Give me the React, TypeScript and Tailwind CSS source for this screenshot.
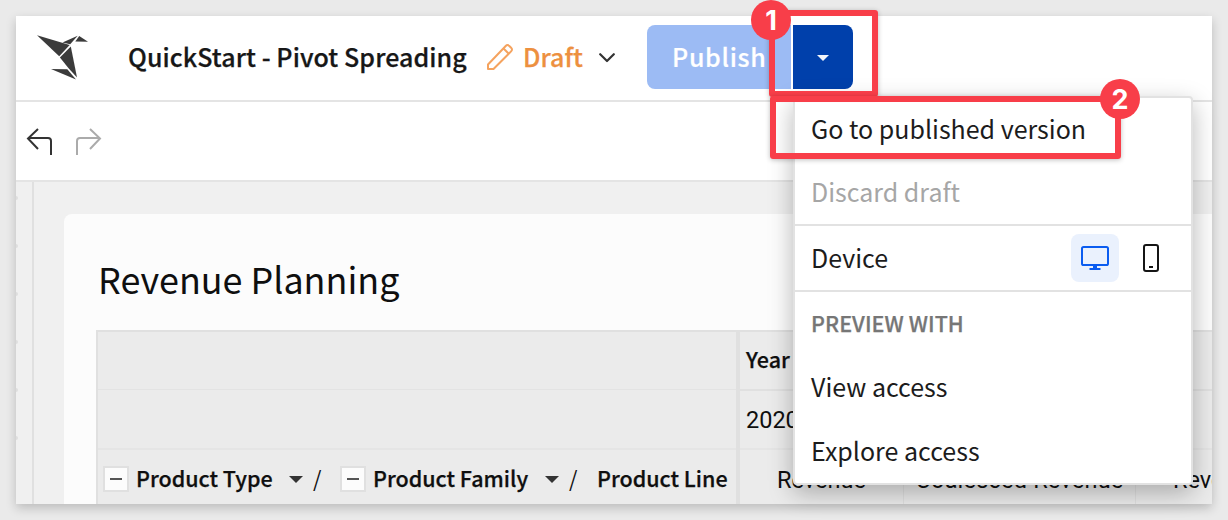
const T = ({ c, children }: { c: string; children: string }) => (
  <div className={"whitespace-nowrap " + c}>{children}</div>
);

function Caret({ c }: { c: string }) {
  return (
    <svg className={c} viewBox="0 0 14 7">
      <path d="M0 0H14L7 7Z" fill="currentColor" />
    </svg>
  );
}

function Minus() {
  return (
    <div className="mt-[2px] flex h-[26px] w-[26px] shrink-0 items-center justify-center border-2 border-[#e0e0e0] bg-[#fcfcfc]">
      <div className="h-[2px] w-3 bg-[#555]" />
    </div>
  );
}

function TopBar() {
  return (
    <header className="flex h-[86px] shrink-0 items-center border-b-2 border-[#e4e4e4] bg-white">
      <svg className="ml-[21px] h-[46px] w-[52px] shrink-0" viewBox="37 35 52 46" fill="#3b3b3b">
        <path d="M37 35.3L69.7 44.9L59.2 56.3Z" />
        <path d="M62.5 42.4L77.7 35.8L70.2 44.2Z" />
        <path d="M79.2 36L88 41.7L75.3 41.6Z" />
        <path d="M70.8 46.4L77 77.4L69 68.8L59.9 57.6Z" />
        <path d="M51 69L67.3 69.2L76 79.4Z" />
      </svg>
      <T c="-mt-[3px] ml-[39px] w-[339px] text-[25px] font-medium tracking-[0.08px] text-[#171717] [-webkit-text-stroke:0.25px_#171717]">QuickStart - Pivot Spreading</T>
      <svg className="-mt-[2px] ml-[19px] h-[28px] w-[28px] shrink-0" viewBox="486 42 28 28" fill="none" stroke="#f5a35f" strokeWidth="2" strokeLinejoin="round">
        <path d="M488 68V63.5L505.7 45Q507.5 43.2 509.3 45L511.1 46.8Q512.9 48.6 511.1 50.4L493.5 68Z" />
        <path d="M503.5 47.5L508.8 52.8" />
      </svg>
      <T c="-mt-[3px] ml-[9px] w-[59px] text-[25px] font-medium text-[#ed903f] [-webkit-text-stroke:0.25px_#ed903f]">Draft</T>
      <svg className="ml-[17px] h-[10px] w-[16px] shrink-0" viewBox="0 0 16 10" fill="none" stroke="#333" strokeWidth="2.2" strokeLinecap="round" strokeLinejoin="round">
        <path d="M1.2 1.2L8 8L14.8 1.2" />
      </svg>
      <div className="ml-8 mt-[-2px] flex h-16 w-[144px] shrink-0 items-center rounded-l-lg bg-[#9cbbf4] pl-[25px]">
        <T c="-mt-[2px] text-[25px] font-medium tracking-[0.7px] text-white [-webkit-text-stroke:0.2px_white]">Publish</T>
      </div>
      <div className="ml-[2px] mt-[-2px] flex h-16 w-[60px] shrink-0 items-center justify-center rounded-r-lg bg-[#0040ab] pt-[2px] text-[#f2f5fa]">
        <Caret c="h-[6px] w-3" />
      </div>
    </header>
  );
}

function Toolbar() {
  return (
    <div className="flex h-20 shrink-0 items-center border-b-2 border-[#e4e4e4] bg-white pt-[2px]">
      <svg className="ml-[10px] h-[28px] w-[28px] shrink-0" viewBox="26 128 28 28" fill="none" stroke="#333" strokeWidth="2">
        <path d="M38 129L28 138.5L38 149M28 138H48Q51 138 51 141V155" />
      </svg>
      <svg className="ml-[21px] h-[28px] w-[28px] shrink-0" viewBox="75 128 28 28" fill="none" stroke="#ababab" strokeWidth="2">
        <path d="M90 129L100 138.5L90 149M100 138H80Q77 138 77 141V155" />
      </svg>
    </div>
  );
}

function PivotTable() {
  return (
    <div className="ml-8 flex h-[176px] w-[1120px] border-l-2 border-t-2 border-[#e0e0e0] bg-[#ebebeb] text-[#0f0f0f]">
      <div className="flex w-[642px] shrink-0 flex-col border-r-4 border-[#e0e0e0]">
        <div className="h-[58px] shrink-0 border-b border-[#e3e3e3]" />
        <div className="h-[60px] shrink-0 border-b-2 border-[#e5e5e5]" />
        <div className="flex h-[58px] items-center pl-[5px]">
          <Minus />
          <T c="ml-[7px] w-[137px] text-[21.5px] font-medium [-webkit-text-stroke:0.25px_#0f0f0f]">Product Type</T>
          <Caret c="ml-[16px] mt-[2px] h-[7px] w-[14px] shrink-0 text-[#333]" />
          <T c="ml-[10px] w-[8px] text-[21.5px]">/</T>
          <div className="w-[19px] shrink-0" />
          <Minus />
          <T c="ml-[7px] w-[156px] text-[21.5px] font-medium [-webkit-text-stroke:0.25px_#0f0f0f]">Product Family</T>
          <Caret c="ml-[16px] mt-[2px] h-[7px] w-[14px] shrink-0 text-[#333]" />
          <T c="ml-[10px] w-[8px] text-[21.5px]">/</T>
          <T c="ml-[20px] text-[21.5px] font-medium [-webkit-text-stroke:0.25px_#0f0f0f]">Product Line</T>
        </div>
      </div>
      <div className="flex w-[476px] shrink-0 flex-col">
        <div className="flex h-[59px] shrink-0 items-center border-b-2 border-[#e0e0e0] pb-[3px] pl-[6px]">
          <T c="text-[21.5px] font-medium [-webkit-text-stroke:0.25px_#0f0f0f]">Year</T>
        </div>
        <div className="flex h-[59px] shrink-0 items-center border-b-2 border-[#e5e5e5] pl-[6px] pt-[2px] font-[Roboto]">
          <T c="text-[23.5px]">2020</T>
        </div>
        <div className="flex h-[58px] shrink-0 overflow-hidden pt-[4px] font-[Roboto] text-[23.5px]">
          <div className="-mt-1 flex w-[164px] shrink-0 items-center justify-center border-r border-[#e0e0e0] pt-1"><T c="">Revenue</T></div>
          <div className="-mt-1 flex w-[232px] shrink-0 items-center justify-center border-r border-[#e0e0e0] pt-1"><T c="tracking-[0.2px]">Coalesced Revenue</T></div>
          <div className="-mt-1 flex shrink-0 items-center pl-[37px] pt-1"><T c="">Revenue</T></div>
        </div>
      </div>
    </div>
  );
}

function Workspace() {
  return (
    <div className="flex flex-1 overflow-hidden bg-[#f0f0f0]">
      <div className="flex w-[18px] shrink-0 flex-col gap-[44px] border-r-2 border-[#e0e0e0] pt-[14px]">
        {[0, 1, 2, 3, 4, 5].map((i) => (
          <div key={i} className="h-1 w-[2px] shrink-0 rounded-r-full bg-[#dedede]" />
        ))}
      </div>
      <div className="ml-[30px] mt-8 w-[1148px] shrink-0 rounded-tl-lg bg-[#fcfcfc]">
        <div className="flex h-[116px] items-center pl-[34px] pt-[14px]">
          <T c="text-[35.9px] text-[#0f0f0f]">Revenue Planning</T>
        </div>
        <PivotTable />
      </div>
    </div>
  );
}

function PublishMenu() {
  return (
    <div className="absolute left-[793px] top-[96px] flex h-[389px] w-[400px] flex-col rounded-[4px] border-2 border-[#e2e2e2] bg-white text-[25px] text-[#1c1c1c] shadow-[0_8px_24px_rgba(0,0,0,0.28)]">
      <div className="flex h-16 shrink-0 items-center pb-1 pl-4"><T c="">Go to published version</T></div>
      <div className="flex h-[64px] shrink-0 items-center border-b-2 border-[#e2e2e2] pb-1 pl-4 text-[#a6a6a6]"><T c="">Discard draft</T></div>
      <div className="flex h-[66px] shrink-0 items-center border-b-2 border-[#e2e2e2] pl-4">
        <T c="-mt-[2px] w-[260px]">Device</T>
        <div className="flex h-12 w-12 items-center justify-center rounded-lg bg-[#eaf1fd]">
          <svg className="h-6 w-7" viewBox="0 0 28 24" fill="none" stroke="#0a5cf0" strokeWidth="2">
            <rect x="1" y="1" width="26" height="18" rx="1.6" />
            <path d="M8.5 23H19.5" />
            <path d="M12 21H16" />
          </svg>
        </div>
        <svg className="ml-6 h-7 w-4" viewBox="0 0 16 28" fill="none" stroke="#151515" strokeWidth="2">
          <rect x="1" y="1" width="14" height="26" rx="2" />
          <path d="M6 23H10" />
        </svg>
      </div>
      <div className="flex h-16 shrink-0 items-center pb-[2px] pl-4 text-[21.5px] font-medium text-[#767676]"><T c="tracking-[0.05px] [-webkit-text-stroke:0.25px_#767676]">PREVIEW WITH</T></div>
      <div className="flex h-16 shrink-0 items-center pb-1 pl-4"><T c="">View access</T></div>
      <div className="flex h-16 shrink-0 items-center pb-1 pl-4"><T c="">Explore access</T></div>
    </div>
  );
}

export default function App() {
  return (
    <div className="relative flex h-[520px] w-[1228px] overflow-hidden bg-[#eaeaea] p-4 font-['Noto_Sans_CJK_SC',sans-serif] leading-none">
      <main className="flex h-[488px] w-[1196px] flex-col overflow-hidden bg-white shadow-[0_4px_10px_rgba(0,0,0,0.2)]">
        <TopBar />
        <Toolbar />
        <Workspace />
      </main>
      <PublishMenu />
      <div className="absolute left-[769px] top-[10px] h-[87px] w-[109px] rounded-[3px] border-[6px] border-[#f83e49] shadow-[0_1px_5px_rgba(0,0,0,0.25)]" />
      <div className="absolute left-[770px] top-[96px] h-[63px] w-[351px] rounded-[3px] border-[6px] border-[#f83e49] shadow-[0_1px_5px_rgba(0,0,0,0.25)]" />
      <div className="absolute left-[751px] top-0 flex h-10 w-10 items-center justify-center rounded-full bg-[#f83e49] font-[Inter] text-[27px] font-bold text-white">1</div>
      <div className="absolute left-[1100px] top-[79px] flex h-10 w-10 items-center justify-center rounded-full bg-[#f83e49] font-[Inter] text-[27px] font-bold text-white">2</div>
    </div>
  );
}
